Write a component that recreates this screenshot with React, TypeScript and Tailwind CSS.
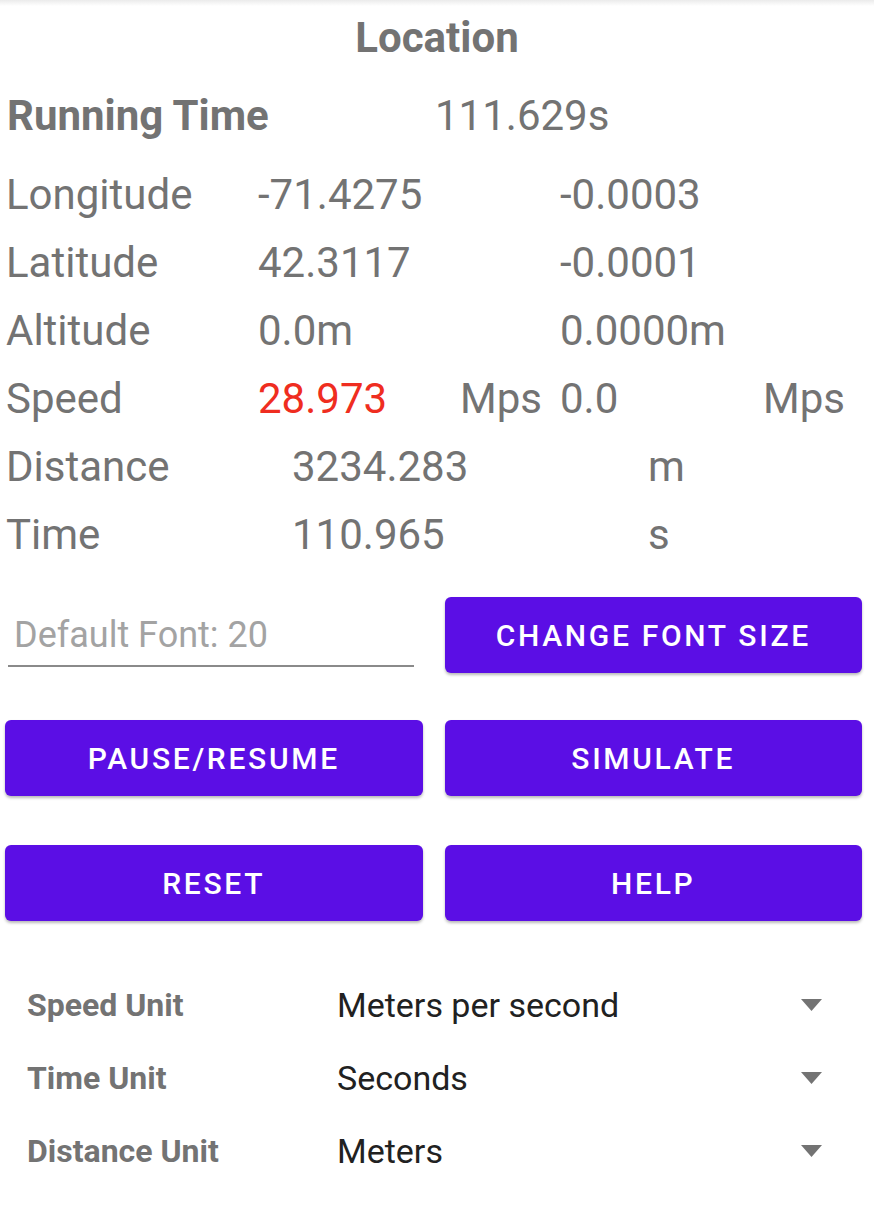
import React from 'react';

const rows = [
  { label: 'Longitude', value: '-71.4275', delta: '-0.0003' },
  { label: 'Latitude', value: '42.3117', delta: '-0.0001' },
  { label: 'Altitude', value: '0.0m', delta: '0.0000m' },
];

const units = [
  { label: 'Speed Unit', value: 'Meters per second' },
  { label: 'Time Unit', value: 'Seconds' },
  { label: 'Distance Unit', value: 'Meters' },
];

function ActionButton({ text }: { text: string }) {
  return (
    <button className="flex-1 h-[76px] rounded-[6px] bg-[#5b0ee5] text-white text-[30px] font-medium tracking-[2.7px] shadow-[0_2px_3px_rgba(0,0,0,0.28)]">
      {text}
    </button>
  );
}

function Caret() {
  return (
    <svg width="21" height="12" viewBox="0 0 21 12" className="text-[#737373]">
      <path d="M0 0h21L10.5 12z" fill="currentColor" />
    </svg>
  );
}

export default function App() {
  return (
    <div className="relative w-[874px] h-[1216px] overflow-hidden bg-white font-['Roboto',sans-serif] text-[#737373]">
      {/* faint app bar edge */}
      <div className="absolute left-0 top-0 w-full h-[6px] bg-gradient-to-b from-[#ebebeb] to-white" />

      <div className="h-[76px] flex items-center justify-center">
        <h1 className="text-[42px] font-bold leading-none">Location</h1>
      </div>

      <div className="h-[80px] flex items-center text-[42px] leading-none">
        <div className="w-[435px] pl-[7px] font-bold">Running Time</div>
        <div>111.629s</div>
      </div>

      <div className="mt-[5px] text-[42px] leading-none">
        {rows.map((r) => (
          <div key={r.label} className="h-[68px] flex items-center">
            <div className="w-[258px] pl-[6px]">{r.label}</div>
            <div className="w-[302px]">{r.value}</div>
            <div>{r.delta}</div>
          </div>
        ))}

        <div className="h-[68px] flex items-center">
          <div className="w-[258px] pl-[6px]">Speed</div>
          <div className="w-[202px] text-[#ef2d20]">28.973</div>
          <div className="w-[100px]">Mps</div>
          <div className="w-[203px]">0.0</div>
          <div>Mps</div>
        </div>

        <div className="h-[68px] flex items-center">
          <div className="w-[292px] pl-[6px]">Distance</div>
          <div className="w-[356px]">3234.283</div>
          <div>m</div>
        </div>

        <div className="h-[68px] flex items-center">
          <div className="w-[292px] pl-[6px]">Time</div>
          <div className="w-[356px]">110.965</div>
          <div>s</div>
        </div>
      </div>

      <div className="mt-[28px] flex gap-[22px] pl-[5px] pr-[12px]">
        <div className="flex-1 h-[76px] flex items-start">
          <div className="ml-[3px] w-[406px] h-[70px] pt-[7px] border-b-2 border-[#8a8a8a] flex items-center pl-[6px]">
            <span className="text-[36px] text-[#a3a3a3] leading-none">Default Font: 20</span>
          </div>
        </div>
        <ActionButton text="CHANGE FONT SIZE" />
      </div>

      <div className="mt-[47px] flex gap-[22px] pl-[5px] pr-[12px]">
        <ActionButton text="PAUSE/RESUME" />
        <ActionButton text="SIMULATE" />
      </div>

      <div className="mt-[49px] flex gap-[22px] pl-[5px] pr-[12px]">
        <ActionButton text="RESET" />
        <ActionButton text="HELP" />
      </div>

      <div className="mt-[47px]">
        {units.map((u) => (
          <div key={u.label} className="h-[73px] flex items-center pr-[52px]">
            <div className="w-[337px] pl-[27px] text-[32px] font-bold leading-none">{u.label}</div>
            <div className="flex-1 text-[34px] text-[#212121] leading-none">{u.value}</div>
            <Caret />
          </div>
        ))}
      </div>
    </div>
  );
}
